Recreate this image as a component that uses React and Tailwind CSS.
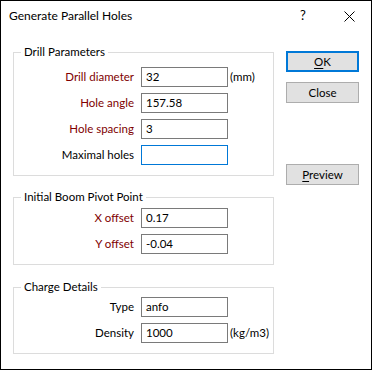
import React from "react";

const font = { fontFamily: 'Lato, "Liberation Sans", sans-serif' };

function Row({ label, value, red, unit, focus }) {
  return (
    <div className="flex items-center h-[20px]">
      <div className={`w-[120px] text-right text-[11.5px] leading-[20px] ${red ? "text-[#800000]" : "text-black"}`}>{label}</div>
      <div className={`ml-[7px] w-[87px] h-[20px] border ${focus ? "border-[#0078d7]" : "border-[#7a7a7a]"} bg-white text-[11.5px] leading-[18px] pl-[4px] text-black`}>{value}</div>
      {unit && <div className="ml-[2px] text-[11.5px] leading-[20px] text-black">{unit}</div>}
    </div>
  );
}

function Group({ title, children, className, rowsTop }) {
  return (
    <div className={`border border-[#dcdcdc] w-[261px] ${className}`}>
      <div className="-mt-[9px] ml-[7px] px-[3px] w-fit bg-white text-[11.5px] leading-[16px] h-[16px] text-black">{title}</div>
      <div className={`flex flex-col gap-[6px] ${rowsTop}`}>{children}</div>
    </div>
  );
}

function Btn({ children, def }) {
  return (
    <div className={`w-[73px] h-[21px] flex items-center justify-center bg-[#e1e1e1] text-[11.5px] text-black ${def ? "border-2 border-[#0078d7]" : "border border-[#adadad]"}`}>
      {children}
    </div>
  );
}

export default function App() {
  return (
    <div style={font} className="w-[372px] h-[370px] border border-black bg-white flex flex-col">
      <div className="h-[30px] flex items-center shrink-0">
        <div className="pl-[8px] text-[12px] text-black flex-1">Generate Parallel Holes</div>
        <div className="text-[13px] text-black w-[12px] text-center mr-[35px]">?</div>
        <svg width="11" height="11" viewBox="0 0 11 11" className="mr-[16px]">
          <path d="M0.5 0.5 L10.5 10.5 M10.5 0.5 L0.5 10.5" stroke="#000" strokeWidth="1" />
        </svg>
      </div>
      <div className="flex pl-[12px]">
        <div className="flex flex-col">
          <Group title="Drill Parameters" className="mt-[21px] pb-[10px]" rowsTop="mt-[7px]">
            <Row label="Drill diameter" value="32" red unit="(mm)" />
            <Row label="Hole angle" value="157.58" red />
            <Row label="Hole spacing" value="3" red />
            <Row label="Maximal holes" value="" focus />
          </Group>
          <Group title="Initial Boom Pivot Point" className="mt-[21px] pb-[10px]" rowsTop="mt-[3px]">
            <Row label="X offset" value="0.17" red />
            <Row label="Y offset" value="-0.04" red />
          </Group>
          <Group title="Charge Details" className="mt-[22px] pb-[10px]" rowsTop="mt-[2px]">
            <Row label="Type" value="anfo" />
            <Row label="Density" value="1000" unit="(kg/m3)" />
          </Group>
        </div>
        <div className="ml-[12px] flex flex-col mt-[20px]">
          <Btn def><span><u className="underline-offset-2">O</u>K</span></Btn>
          <div className="mt-[10px]"><Btn>Close</Btn></div>
          <div className="mt-[61px]"><Btn><span><u className="underline-offset-2">P</u>review</span></Btn></div>
        </div>
      </div>
    </div>
  );
}
